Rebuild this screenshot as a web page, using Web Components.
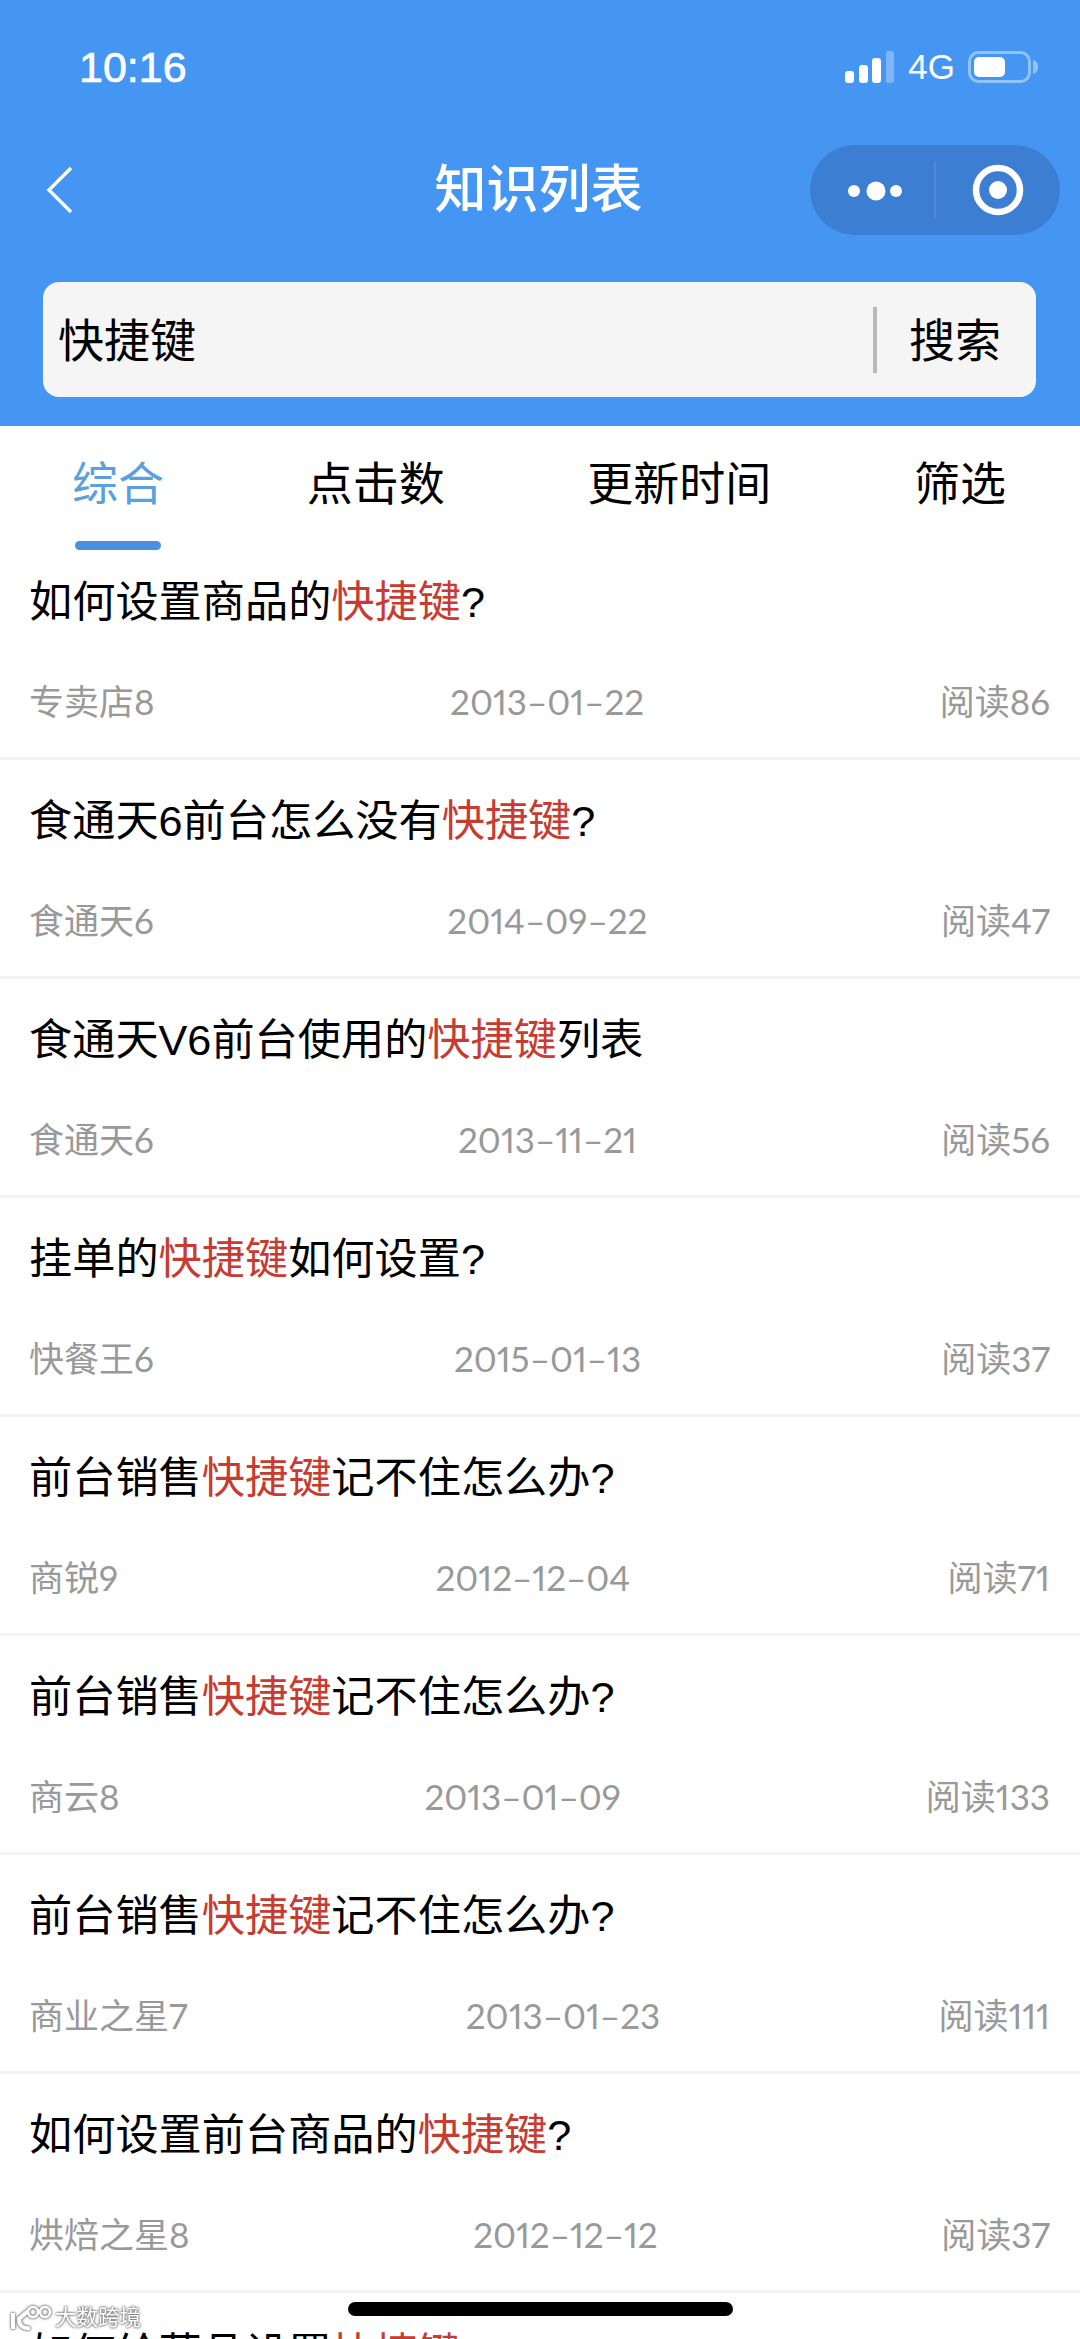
<!DOCTYPE html>
<html lang="zh">
<head>
<meta charset="utf-8">
<title>知识列表</title>
<style>
    html, body { margin: 0; height: 2339px; overflow: hidden; background: #fff; }
    body { font-family: "Liberation Sans", "Noto Sans CJK SC", sans-serif; }
</style>
</head>
<body>

<template id="statusBar">
    <style>
        :host { display: flex; justify-content: space-between; align-items: center; height: 46px; padding: 44px 41px 0 79px; color: #fff; }
        .time { font-size: 43px; line-height: 46px; font-weight: 400; -webkit-text-stroke: .7px #fff; }
        .right { display: flex; align-items: center; }
        .net { font-size: 35px; line-height: 46px; margin: 0 13px 0 13px; }
        svg { display: block; }
    </style>
    <span class="time"><slot name="time"></slot></span>
    <div class="right">
        <svg width="50" height="32" viewBox="0 0 50 32">
            <rect x="0" y="20" width="9" height="12" rx="3" fill="#fff"/>
            <rect x="14" y="14" width="9" height="18" rx="3" fill="#fff"/>
            <rect x="27" y="7" width="9" height="25" rx="3" fill="#fff"/>
            <rect x="41" y="0" width="8" height="32" rx="2" fill="#7db5f7"/>
        </svg>
        <span class="net"><slot name="net"></slot></span>
        <svg width="71" height="32" viewBox="0 0 71 32">
            <rect x="1.5" y="1.5" width="60" height="29" rx="9" fill="none" stroke="#92c2fa" stroke-width="3"/>
            <rect x="6" y="6" width="31" height="20" rx="5" fill="#fff"/>
            <path d="M65 9c4 1 5 4 5 7s-1 6-5 7z" fill="#92c2fa"/>
        </svg>
    </div>
</template>

<template id="navBar">
    <style>
        :host { display: grid; grid-template-columns: 1fr auto 1fr; align-items: center; height: 90px; margin-top: 55px; }
        .back { padding-left: 45px; display: flex; }
        .title { color: #fff; font-size: 52px; line-height: 60px; font-weight: 500; margin-right: 3px; }
        .capsule { justify-self: end; margin-right: 20px; width: 250px; height: 90px; border-radius: 45px; background: #3c7fd2; display: flex; align-items: center; box-sizing: border-box; position: relative; }
        .capsule svg { display: block; }
    </style>
    <div class="back">
        <svg width="30" height="50" viewBox="0 0 30 50"><path d="M26 3 4 25l22 22" fill="none" stroke="#fff" stroke-width="3.4"/></svg>
    </div>
    <div class="title"><slot></slot></div>
    <div class="capsule">
        <svg width="250" height="90" viewBox="0 0 250 90">
            <circle cx="44" cy="46" r="6" fill="#fff"/>
            <circle cx="66" cy="46" r="9.5" fill="#fff"/>
            <circle cx="86" cy="46" r="6" fill="#fff"/>
            <rect x="124.5" y="17" width="1" height="56" fill="#5f97dc"/>
            <circle cx="188" cy="45" r="22" fill="none" stroke="#fff" stroke-width="6.5"/>
            <circle cx="188" cy="45" r="9" fill="#fff"/>
        </svg>
    </div>
</template>

<template id="searchBox">
    <style>
        :host { display: flex; align-items: center; height: 115px; margin: 47px 44px 29px 43px; border-radius: 16px; background: #f5f5f5; font-size: 46px; color: #000; }
        .text { flex: 1; padding: 0 0 6px 15px; }
        .line { width: 4px; height: 66px; background: #b9b9b9; }
        .btn { padding: 0 35px 6px 32px; }
    </style>
    <div class="text"><slot></slot></div>
    <div class="line"></div>
    <div class="btn"><slot name="action"></slot></div>
</template>

<template id="filterTabs">
    <style>
        :host { display: flex; justify-content: space-between; align-items: flex-start; height: 115px; padding: 0 74px 0 72px; background: #fff; }
    </style>
    <slot></slot>
</template>

<template id="filterTab">
    <style>
        :host { display: flex; flex-direction: column; align-items: center; font-size: 46px; line-height: 60px; padding-top: 28px; color: #000; }
        :host([active]) { color: #5aa0dc; }
        .bar { width: 86px; height: 9px; margin-top: 27px; border-radius: 5px; background: transparent; }
        :host([active]) .bar { background: #4a90e2; }
    </style>
    <slot></slot>
    <div class="bar"></div>
</template>

<template id="keyWord"><style>:host { color: #c73b30; }</style><slot></slot></template>

<template id="knowledgeItem">
    <style>
        :host { display: block; box-sizing: border-box; height: 219px; padding: 33px 30px 0 29px; border-bottom: 3px solid #f3f3f3; overflow: hidden; }
        .title { font-size: 43.2px; line-height: 56px; color: #000; }
        .meta { display: flex; justify-content: space-between; margin-top: 49px; font-size: 35px; line-height: 44px; color: #999; font-family: "Lato", "Noto Sans CJK SC", sans-serif; font-feature-settings: "pnum"; }
    </style>
    <div class="title"><slot></slot></div>
    <div class="meta">
        <span><slot name="shop"></slot></span>
        <span><slot name="date"></slot></span>
        <span><slot name="reads"></slot></span>
    </div>
</template>

<template id="waterMark">
    <style>
        :host { position: absolute; left: 10px; top: 2305px; display: flex; align-items: center; gap: 3px; color: #fff; font-size: 21.5px; line-height: 26px; filter: drop-shadow(0 0 1px #666) drop-shadow(0 0 1px #999); }
        svg { display: block; }
    </style>
    <svg width="42" height="26" viewBox="0 0 42 26">
        <path d="M3 8v16M18 6l-9 8c0 7 5 10 11 9" fill="none" stroke="#fff" stroke-width="4"/>
        <circle cx="23" cy="7" r="5" fill="none" stroke="#fff" stroke-width="2.6"/>
        <circle cx="35" cy="7" r="5" fill="none" stroke="#fff" stroke-width="2.6"/>
    </svg>
    <span><slot></slot></span>
</template>

<app-header>
    <status-bar>
        <span slot="time">10:16</span>
        <span slot="net">4G</span>
    </status-bar>
    <nav-bar>知识列表</nav-bar>
    <search-box>快捷键<span slot="action">搜索</span></search-box>
</app-header>

<filter-tabs>
    <filter-tab active>综合</filter-tab>
    <filter-tab>点击数</filter-tab>
    <filter-tab>更新时间</filter-tab>
    <filter-tab>筛选</filter-tab>
</filter-tabs>

<knowledge-item>如何设置商品的<key-word>快捷键</key-word>?
    <span slot="shop">专卖店8</span><span slot="date">2013–01–22</span><span slot="reads">阅读86</span>
</knowledge-item>
<knowledge-item>食通天6前台怎么没有<key-word>快捷键</key-word>?
    <span slot="shop">食通天6</span><span slot="date">2014–09–22</span><span slot="reads">阅读47</span>
</knowledge-item>
<knowledge-item>食通天V6前台使用的<key-word>快捷键</key-word>列表
    <span slot="shop">食通天6</span><span slot="date">2013–11–21</span><span slot="reads">阅读56</span>
</knowledge-item>
<knowledge-item>挂单的<key-word>快捷键</key-word>如何设置?
    <span slot="shop">快餐王6</span><span slot="date">2015–01–13</span><span slot="reads">阅读37</span>
</knowledge-item>
<knowledge-item>前台销售<key-word>快捷键</key-word>记不住怎么办?
    <span slot="shop">商锐9</span><span slot="date">2012–12–04</span><span slot="reads">阅读71</span>
</knowledge-item>
<knowledge-item>前台销售<key-word>快捷键</key-word>记不住怎么办?
    <span slot="shop">商云8</span><span slot="date">2013–01–09</span><span slot="reads">阅读133</span>
</knowledge-item>
<knowledge-item>前台销售<key-word>快捷键</key-word>记不住怎么办?
    <span slot="shop">商业之星7</span><span slot="date">2013–01–23</span><span slot="reads">阅读111</span>
</knowledge-item>
<knowledge-item>如何设置前台商品的<key-word>快捷键</key-word>?
    <span slot="shop">烘焙之星8</span><span slot="date">2012–12–12</span><span slot="reads">阅读37</span>
</knowledge-item>
<knowledge-item>如何给菜品设置<key-word>快捷键</key-word>?</knowledge-item>

<water-mark>大数跨境</water-mark>
<home-bar></home-bar>

<script>
    // every element just clones its template into an open shadow root
    class TemplateElement extends HTMLElement {
        constructor(){
            super()
            const template = document.querySelector('#' + this.constructor.templateId)
            this.attachShadow({mode: 'open'}).appendChild(template.content.cloneNode(true))
        }
    }

    const parts = {
        'status-bar': 'statusBar',
        'nav-bar': 'navBar',
        'search-box': 'searchBox',
        'filter-tabs': 'filterTabs',
        'filter-tab': 'filterTab',
        'key-word': 'keyWord',
        'knowledge-item': 'knowledgeItem',
        'water-mark': 'waterMark'
    }
    Object.keys(parts).forEach(name => {
        window.customElements.define(name, class extends TemplateElement {
            static get templateId(){ return parts[name] }
        })
    })

    class AppHeader extends HTMLElement {
        constructor(){
            super()
            this.attachShadow({mode: 'open'}).innerHTML = `
                <style>:host{display:block;height:426px;overflow:hidden;background:#4596f3;}</style>
                <slot></slot>`
        }
    }
    window.customElements.define('app-header', AppHeader)

    class HomeBar extends HTMLElement {
        constructor(){
            super()
            this.attachShadow({mode: 'open'}).innerHTML = `
                <style>:host{position:absolute;left:348px;top:2302px;width:385px;height:14px;border-radius:7px;background:#000;}</style>`
        }
    }
    window.customElements.define('home-bar', HomeBar)
</script>
</body>
</html>
